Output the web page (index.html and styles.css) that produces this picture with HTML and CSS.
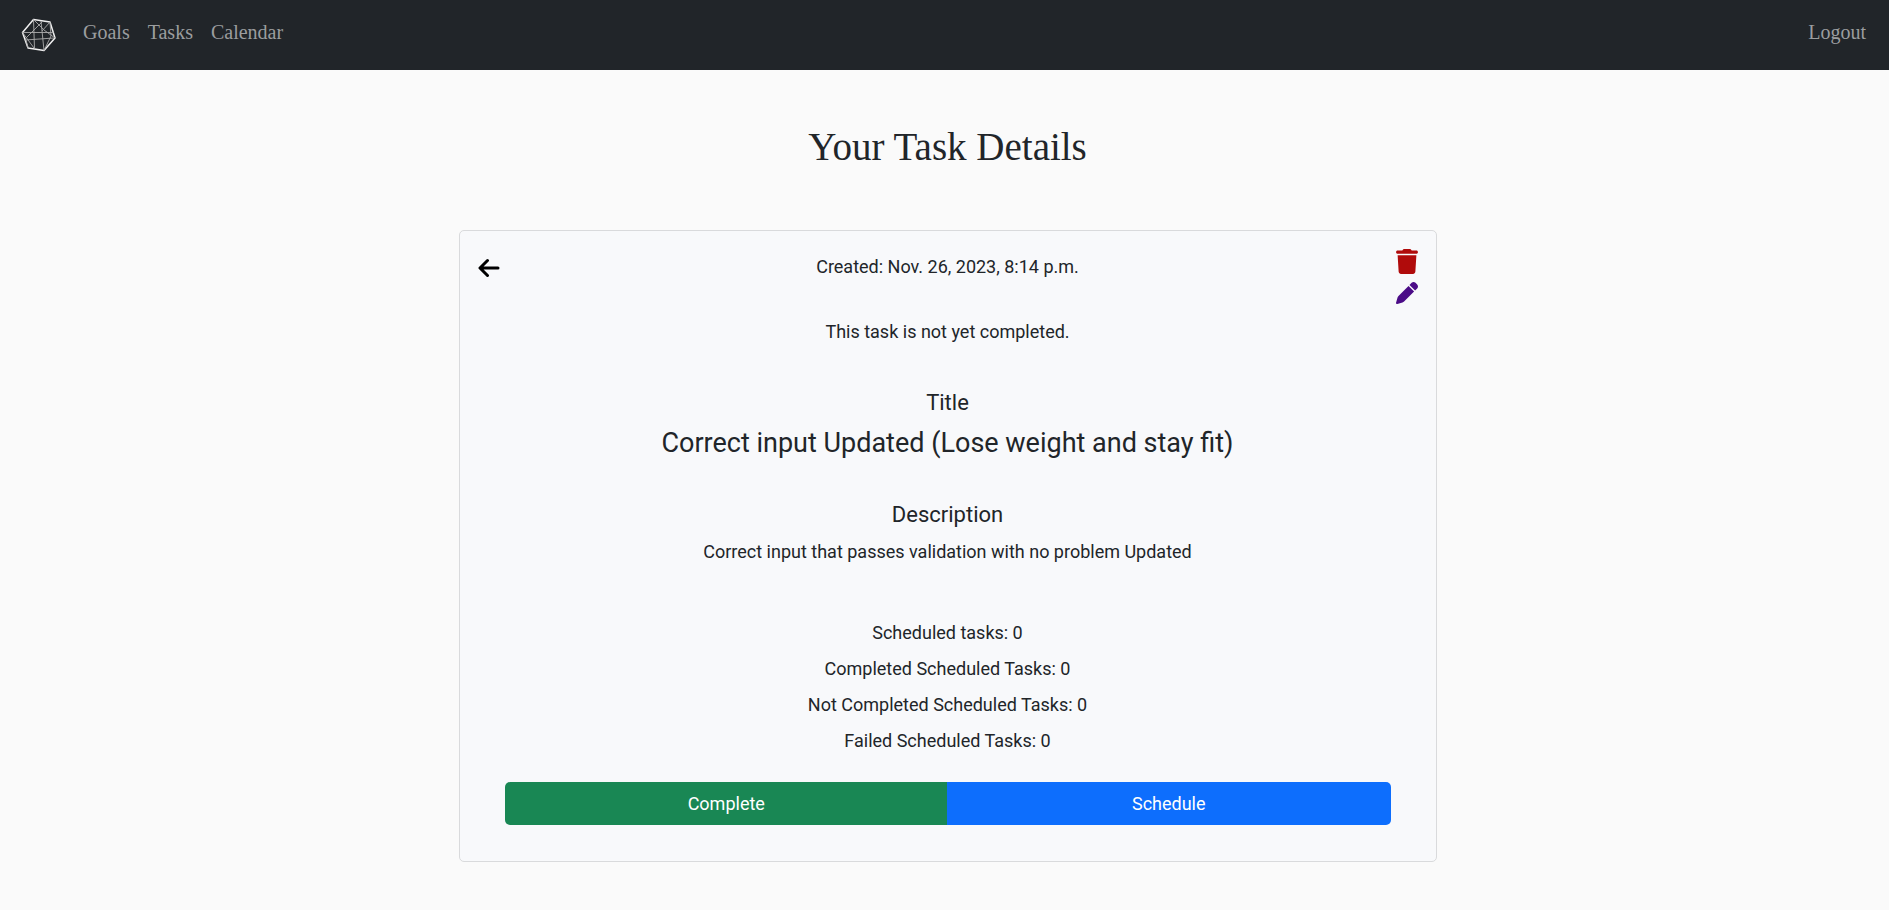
FILE: index.html
```html
<!DOCTYPE html>
<html lang="en">
<head>
<meta charset="utf-8">
<title>Your Task Details</title>
<link rel="stylesheet" href="styles.css">
</head>
<body>
<header class="navbar">
  <a class="brand" href="#" aria-label="Home">
    <svg width="36" height="36" viewBox="0 0 36 36" fill="none" stroke="#fff" stroke-linejoin="round">
      <path stroke-width="1.5" stroke="#f0f0f0" d="M12.500 2.500 29 5l5 16-11 12.500L7 31 1.500 15.500z"/>
      <path stroke-width=".9" stroke="#aaa" d="M12.500 2.500l1 29M20 4l3 29.500M12.500 2.500 23 13l11 8M29 5 21 14M21 5 4 22M1.500 15.500h31M4 23l29-2M1.500 15.500 13 31M29 5l1 14-7 14.500M7 31l-2-8"/>
    </svg>
  </a>
  <nav class="nav-links">
    <a href="#">Goals</a>
    <a href="#">Tasks</a>
    <a href="#">Calendar</a>
  </nav>
  <a class="logout" href="#">Logout</a>
</header>
<main class="page">
  <h1 class="page-title">Your Task Details</h1>
  <section class="card">
    <a class="back" href="#" aria-label="Back">
      <svg width="22" height="20" viewBox="0 0 22 20" fill="none" stroke="#000" stroke-width="3" stroke-linecap="round" stroke-linejoin="round"><path d="M9.500 2.500 2 10l7.500 7.500M2.500 10h17.500"/></svg>
    </a>
    <div class="actions">
      <button class="icon-button" type="button" aria-label="Delete">
        <svg width="22" height="25" viewBox="0 0 448 512" fill="#b00b0b"><path d="M135 18 128 32H32C14 32 0 46 0 64s14 32 32 32h384c18 0 32-14 32-32s-14-32-32-32h-96l-7-14C307 7 296 0 284 0H164c-12 0-23 7-29 18zM416 128H32l21 339c2 25 23 45 48 45h246c25 0 46-20 48-45z"/></svg>
      </button>
      <button class="icon-button" type="button" aria-label="Edit">
        <svg width="22" height="22" viewBox="0 0 512 512" fill="#4b0c87"><path d="M363 19 314 68 444 198l49-49c25-25 25-66 0-91l-39-39c-25-25-66-25-91 0zM291 91 58 324c-10 10-18 23-22 37L1 481c-3 8 0 17 6 24 6 6 15 8 24 6l120-35c14-4 27-12 37-22L421 221z"/></svg>
      </button>
    </div>
    <p class="created">Created: Nov. 26, 2023, 8:14 p.m.</p>
    <p class="status">This task is not yet completed.</p>
    <h2 class="label">Title</h2>
    <p class="task-name">Correct input Updated (Lose weight and stay fit)</p>
    <h2 class="label">Description</h2>
    <p class="description">Correct input that passes validation with no problem Updated</p>
    <div class="stats">
      <p>Scheduled tasks: 0</p>
      <p>Completed Scheduled Tasks: 0</p>
      <p>Not Completed Scheduled Tasks: 0</p>
      <p>Failed Scheduled Tasks: 0</p>
    </div>
    <div class="button-group">
      <button class="btn complete" type="button">Complete</button>
      <button class="btn schedule" type="button">Schedule</button>
    </div>
  </section>
</main>
</body>
</html>
```
FILE: styles.css
```css
* { box-sizing: border-box; }
body {
  margin: 0;
  background: #fafafa;
  color: #212529;
  font: 18px/27px Roboto, sans-serif;
}
h1, h2, p { margin: 0; font-weight: 400; }
.navbar {
  display: flex;
  align-items: center;
  min-height: 70px;
  padding: 0 23px 0 21px;
  background: #212529;
  font-family: "Liberation Serif", serif;
  font-size: 20px;
}
.navbar a { color: #9b9d9f; text-decoration: none; }
.brand { display: flex; }
.nav-links {
  display: flex;
  flex: 1;
  gap: 18px;
  margin-left: 26px;
  padding-bottom: 5px;
}
.logout { padding-bottom: 5px; }
.page { padding: 53px 12px 24px 18px; text-align: center; }
.page-title {
  margin-bottom: 60px;
  font: 400 39px/47px "Liberation Serif", serif;
}
.card {
  position: relative;
  max-width: 978px;
  margin: 0 auto;
  padding: 22px 45px 36px;
  background: #f8f9fb;
  border: 1px solid #d9dadc;
  border-radius: 5px;
}
.back { position: absolute; top: 27px; left: 18px; display: flex; }
.actions {
  position: absolute;
  top: 18px;
  right: 18px;
  display: flex;
  flex-direction: column;
  gap: 8px;
}
.icon-button { display: flex; padding: 0; border: 0; background: none; cursor: pointer; }
.created { margin-bottom: 38px; }
.status { margin-bottom: 44px; }
.label { margin-bottom: 9px; font-size: 22px; line-height: 27px; }
.task-name { margin-bottom: 40px; font-size: 27px; line-height: 36px; }
.label + .description { margin: 10px 0 54px; }
.stats { display: flex; flex-direction: column; gap: 9px; margin-bottom: 28px; }
.button-group { display: flex; }
.btn {
  flex: 1;
  padding: 8px 14px;
  border: 0;
  color: #fff;
  font: inherit;
  cursor: pointer;
}
.complete { background: #198754; border-radius: 5px 0 0 5px; }
.schedule { margin-left: -1px; background: #0d6efd; border-radius: 0 5px 5px 0; }
```
